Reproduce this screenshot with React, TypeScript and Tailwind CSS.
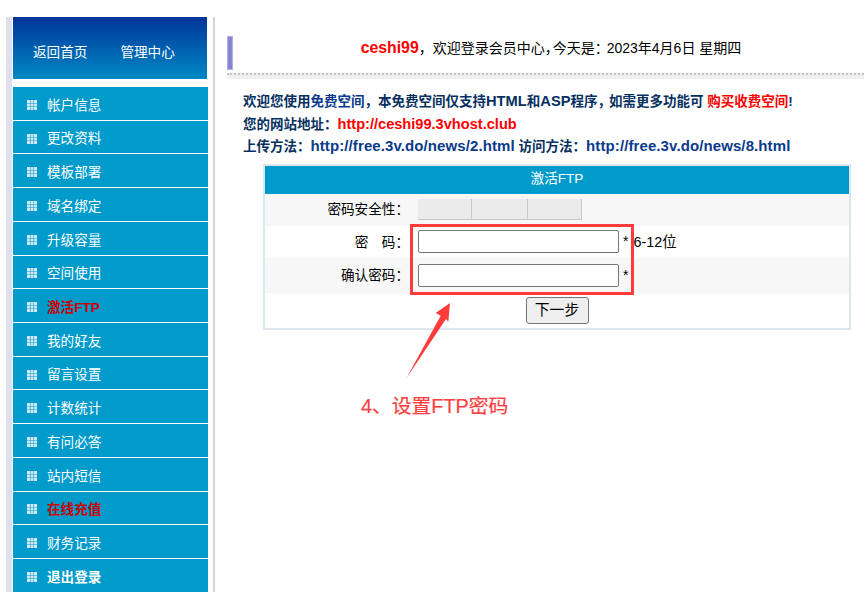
const menu = [
  { label: "帐户信息" },
  { label: "更改资料" },
  { label: "模板部署" },
  { label: "域名绑定" },
  { label: "升级容量" },
  { label: "空间使用" },
  { label: "激活FTP", red: true },
  { label: "我的好友" },
  { label: "留言设置" },
  { label: "计数统计" },
  { label: "有问必答" },
  { label: "站内短信" },
  { label: "在线充值", red: true },
  { label: "财务记录" },
  { label: "退出登录", bold: true },
];

function GridIcon() {
  const cells = [0, 1, 2];
  return (
    <svg width="10" height="10" viewBox="0 0 10 10" className="mt-[3px] shrink-0">
      {cells.map((r) =>
        cells.map((c) => (
          <rect key={`${r}-${c}`} x={c * 3.5} y={r * 3.5} width="3" height="3" fill="#cfe8f2" />
        )),
      )}
    </svg>
  );
}

function Row({ label, bg, h, children }: { label: string; bg: string; h: string; children: React.ReactNode }) {
  return (
    <div className={`flex items-center border-b border-[#eef4fa] ${bg} ${h}`}>
      <div className="w-[144px] pt-[3px] text-right text-[13.6px] text-black">{label}</div>
      <div className="ml-[9px] flex items-center text-[14px] text-black">{children}</div>
    </div>
  );
}

export default function App() {
  return (
    <div
      className="relative flex h-[602px] w-[864px] overflow-hidden bg-white pt-[17px] pl-[6px]"
      style={{ fontFamily: '"Liberation Sans", "Noto Sans CJK SC", sans-serif' }}
    >
      {/* Sidebar */}
      <aside className="box-content flex h-[575px] w-[196px] shrink-0 border-r-2 border-l-[6px] border-r-[#d4d4d8] border-l-[#dfdfee] pr-[4px] pl-px">
        <div className="w-[195px]">
          <div className="flex h-[62px] w-[194px] items-center gap-[33px] bg-gradient-to-b from-[#003399] to-[#0088c4] pt-[10px] pl-[20px] text-[13.6px] text-white">
            <span>返回首页</span>
            <span>管理中心</span>
          </div>
          <nav className="mt-[8px] flex flex-col">
            {menu.map((item) => (
              <div key={item.label} className="mb-px flex h-[32.73px] items-center gap-[10px] bg-[#009acb] pl-[14px] text-[13.6px]">
                <GridIcon />
                <span className={`pt-[5px] ${item.red ? "font-bold text-[#cc0000]" : item.bold ? "font-bold text-white" : "text-white"}`}>
                  {item.label}
                </span>
              </div>
            ))}
          </nav>
        </div>
      </aside>

      {/* Main */}
      <main className="ml-[12px] flex-1">
        <div className="mt-[19px] flex h-[34px]">
          <div className="w-[6px] border border-[#b0b0e4] bg-[#8585d8]" />
          <div className="flex flex-1 items-center justify-center pb-[10px] pl-[5px] text-[14px] text-black">
            <span className="text-[15.8px] font-bold text-[#ff0000]">ceshi99</span>
            <span>
              ，欢迎登录会员中心<span className="tracking-[-6px]">，</span>今天是<span className="tracking-[-2px]">：</span>2023年4月6日 星期四
            </span>
          </div>
        </div>
        <div className="mt-[3px] h-[6px] border-t-2 border-dotted border-[#c4c4c4] bg-[#f0f0f0]" />

        <div className="mt-[11px] pl-[16px] text-[13.5px] leading-[22.5px] font-bold text-[#06305f]">
          <p className="h-[22.5px]">
            欢迎您使用<span className="text-[#0a3a8c]">免费空间</span>，本免费空间仅支持<span className="text-[14.7px]">HTML</span>和<span className="text-[14.7px]">ASP</span>程序<span className="tracking-[-2px]">，</span>如需更多功能可{" "}
            <span className="text-[#ff0000]">购买收费空间</span>!
          </p>
          <p className="h-[22.5px]">
            您的网站地址：<span className="text-[14.6px] text-[#ff0000]">http://ceshi99.3vhost.club</span>
          </p>
          <p className="h-[22.5px]">
            上传方法：<span className="text-[15px] tracking-[0.1px] text-[#0a3a8c]">http://free.3v.do/news/2.html</span> 访问方法：
            <span className="text-[15px] tracking-[0.1px] text-[#0a3a8c]">http://free.3v.do/news/8.html</span>
          </p>
        </div>

        {/* Activate form */}
        <div className="mt-[6px] ml-[36px] w-[588px] border-2 border-[#dde6ee] bg-white">
          <div className="flex h-[28px] items-center justify-center bg-[#009acb] text-[13.6px] text-white">激活FTP</div>
          <Row label="密码安全性：" bg="bg-[#f7f7f7]" h="h-[32px]">
            <div className="mt-px flex h-[21px]">
              <div className="w-[54px] border-r border-b border-[#c8c8c8] bg-[#ebebeb]" />
              <div className="w-[56px] border-r border-b border-[#c8c8c8] bg-[#ebebeb]" />
              <div className="w-[54px] border-r border-b border-[#c8c8c8] bg-[#ebebeb]" />
            </div>
          </Row>
          <Row label="密　码：" bg="bg-white" h="h-[33px]">
            <div className="h-[23px] w-[201px] rounded-[2px] border border-[#767676] bg-white" />
            <span className="ml-[4px]">*</span>
            <span className="ml-[5px] pt-[3px] text-[14.4px]">6-12位</span>
          </Row>
          <Row label="确认密码：" bg="bg-[#f7f7f7]" h="h-[34px]">
            <div className="h-[23px] w-[201px] rounded-[2px] border border-[#767676] bg-white" />
            <span className="ml-[4px]">*</span>
          </Row>
          <div className="flex h-[35px] items-start justify-center pt-[4px]">
            <button className="h-[27px] w-[63px] rounded-[3px] border border-[#767676] bg-[#efefef] text-[14.8px] text-black">
              下一步
            </button>
          </div>
        </div>
      </main>

      {/* Red annotation over the form */}
      <div className="absolute top-[224px] left-[410px] h-[71px] w-[224px] border-[3px] border-[#ff3b3b]" />
      <svg className="absolute top-[300px] left-[400px]" width="60" height="85" viewBox="400 300 60 85">
        <polygon points="406.5,378 440.7,315.7 435.7,313 450,303 448.3,321.7 446,319" fill="#ff3b3b" />
      </svg>
      <div className="absolute top-[392px] left-[361px] text-[19.8px] leading-[28px] text-[#ff4040] [-webkit-text-stroke:0.2px_#ff4040]">
        4、设置FTP密码
      </div>
    </div>
  );
}
